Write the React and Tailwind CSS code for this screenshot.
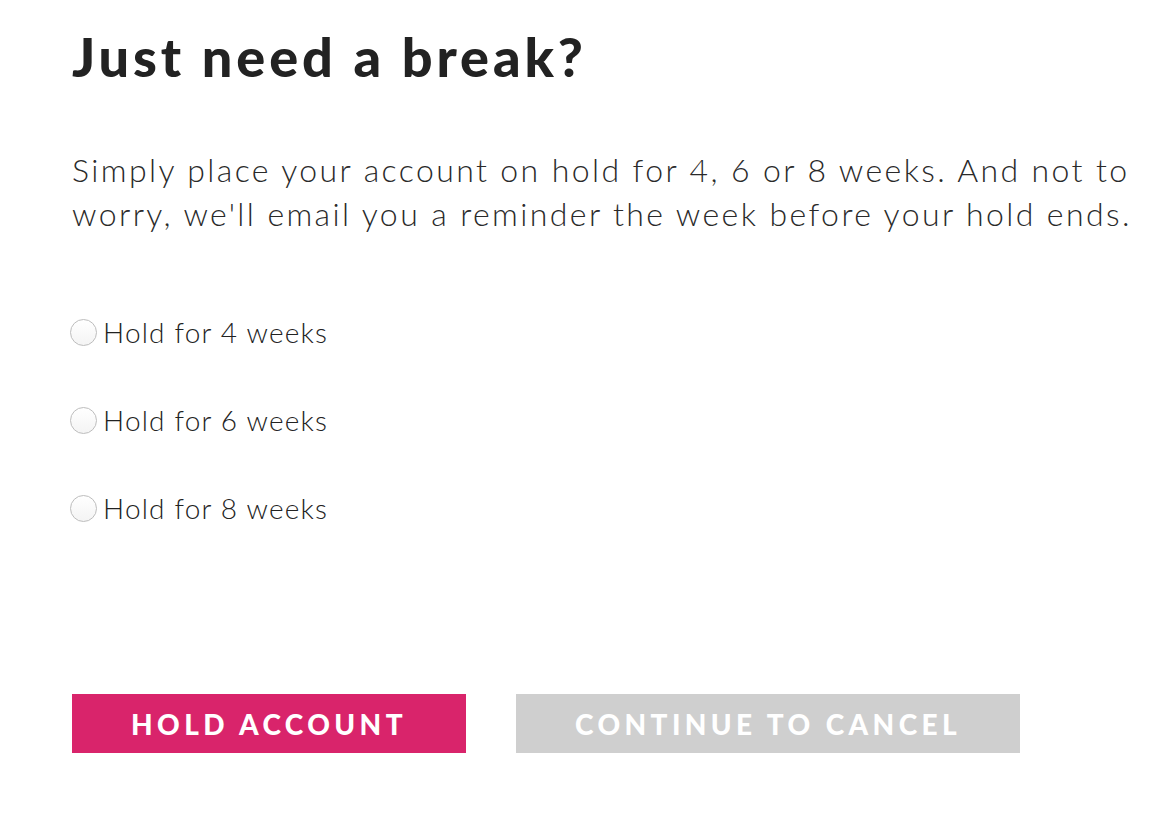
import React, { useState } from 'react';

const options = [4, 6, 8];

function App() {
  const [weeks, setWeeks] = useState(null);

  return (
    <div className="min-h-screen bg-white text-[#222222] pl-[72px] pt-[20px]" style={{ fontFamily: 'Lato, "Open Sans", sans-serif' }}>
      <h1 className="text-[54px] leading-[74px] font-black tracking-[3.9px]">Just need a break?</h1>

      <p className="mt-[54px] text-[32px] leading-[44px] font-light text-[#2a2a2a] tracking-[2.4px]">
        Simply place your account on hold for 4, 6 or 8 weeks. And not to
        <br />
        worry, we'll email you a reminder the week before your hold ends.
      </p>

      {/* hold options */}
      <div className="mt-[76px] flex flex-col gap-[48px] -ml-[2px]">
        {options.map((w) => (
          <label key={w} className="flex items-center gap-[6px] h-[40px] cursor-pointer">
            <span
              onClick={() => setWeeks(w)}
              className="w-[27px] h-[27px] rounded-full border border-[#bdbdbd] bg-gradient-to-b from-white to-[#f4f4f4] flex items-center justify-center"
            >
              {weeks === w && <span className="w-[13px] h-[13px] rounded-full bg-[#d9246b]" />}
            </span>
            <span className="text-[28px] font-light tracking-[1.2px]">Hold for {w} weeks</span>
          </label>
        ))}
      </div>

      <div className="mt-[166px] flex gap-[50px]">
        <button className="w-[394px] h-[59px] bg-[#d9246b] text-white text-[28px] font-black tracking-[4.4px] uppercase">
          Hold account
        </button>
        <button className="w-[504px] h-[59px] bg-[#cfcfcf] text-white text-[28px] font-black tracking-[4.4px] uppercase">
          Continue to cancel
        </button>
      </div>
    </div>
  );
}

export default App;
